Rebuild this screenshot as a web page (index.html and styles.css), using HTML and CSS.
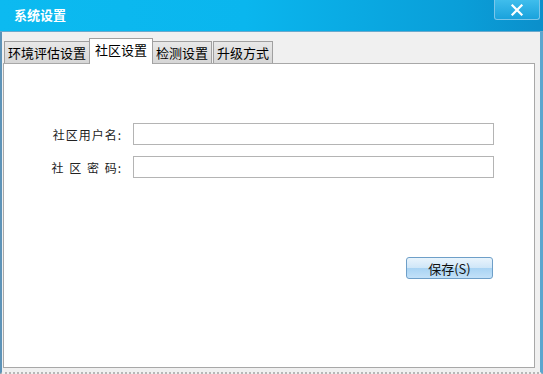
FILE: index.html
```html
<!DOCTYPE html>
<html lang="zh">
<head>
    <meta charset="UTF-8">
    <title>系统设置</title>
    <link rel="stylesheet" href="styles.css">
</head>
<body>
    <div class="window">
        <div class="titlebar">
            <span class="title">系统设置</span>
            <button class="close-btn">
                <svg width="14" height="12" viewBox="0 0 14 12">
                    <path d="M2.5 1.5 L11.5 10.5 M11.5 1.5 L2.5 10.5" stroke="#fff" stroke-width="2.2" stroke-linecap="square"/>
                </svg>
            </button>
        </div>
        <div class="content">
            <div class="tabs">
                <div class="tab">环境评估设置</div>
                <div class="tab active">社区设置</div>
                <div class="tab">检测设置</div>
                <div class="tab">升级方式</div>
            </div>
            <div class="panel">
                <div class="form-row">
                    <label>社区用户名:</label>
                    <input type="text">
                </div>
                <div class="form-row">
                    <label class="spaced">社 区 密 码:</label>
                    <input type="password">
                </div>
                <div class="actions">
                    <button class="save-btn">保存(S)</button>
                </div>
            </div>
        </div>
    </div>
</body>
</html>
```

FILE: styles.css
```css
body {
    margin: 0;
    padding: 0;
    font-family: "Noto Sans CJK SC", "DejaVu Sans", sans-serif;
    font-size: 12px;
    color: #000;
    background: #fff;
}

.window {
    width: 543px;
    height: 374px;
    display: flex;
    flex-direction: column;
    background: #f0f0f0;
}

.titlebar {
    height: 32px;
    display: flex;
    justify-content: space-between;
    align-items: flex-start;
    background: linear-gradient(90deg, #0cbaf0 0%, #0ab6ee 45%, #0a9ed8 85%, #0b8fcb 100%);
    border-bottom: 1px solid #6aa9cc;
    box-sizing: border-box;
}

.title {
    color: #fff;
    font-weight: bold;
    font-size: 13px;
    padding: 5px 0 0 14px;
}

.close-btn {
    width: 46px;
    height: 20px;
    margin-right: 3px;
    padding: 0;
    border: 1px solid #7cc6ea;
    border-top: none;
    border-radius: 0 0 3px 3px;
    background: linear-gradient(#3fbdec, #1aa2dc);
    display: flex;
    align-items: center;
    justify-content: center;
}

.content {
    flex: 1;
    display: flex;
    flex-direction: column;
    padding: 5px 5px 4px 1px;
    border-left: 2px solid #5d93b8;
    border-right: 3px solid #5ca6cf;
    border-bottom: 2px dotted #b7b7b7;
    box-sizing: border-box;
}

.tabs {
    display: flex;
    align-items: flex-end;
    padding-left: 1px;
    height: 26px;
    position: relative;
    z-index: 1;
}

.tab {
    height: 21px;
    line-height: 21px;
    padding: 0 3px;
    font-size: 13px;
    background: linear-gradient(#e8e8e8, #d6d6d6);
    border: 1px solid #a0a0a0;
    border-bottom: none;
    margin-right: 1px;
}

.tab.active {
    height: 25px;
    line-height: 22px;
    background: #fff;
    margin: 0 0 -1px -2px;
    padding: 0 5px;
}

.tab.active + .tab {
    margin-left: -1px;
}

.panel {
    flex: 1;
    background: #fff;
    border: 1px solid #a8a8a8;
    padding-top: 59px;
    display: flex;
    flex-direction: column;
}

.form-row {
    display: flex;
    align-items: center;
    margin-bottom: 11px;
}

.form-row label {
    width: 118px;
    text-align: right;
    padding-right: 11px;
    color: #222;
    letter-spacing: 1px;
}

.form-row label.spaced {
    word-spacing: 1px;
}

.form-row input {
    width: 361px;
    height: 22px;
    box-sizing: border-box;
    border: 1px solid #b4b4b4;
    margin: 0;
}

.actions {
    display: flex;
    justify-content: flex-end;
    padding: 68px 41px 0 0;
}

.save-btn {
    width: 87px;
    height: 22px;
    font-family: inherit;
    font-size: 13px;
    color: #111;
    border: 1px solid #6e9fc8;
    border-radius: 3px;
    background: linear-gradient(#e9f4fc 0%, #cfe6f8 50%, #a9d3f3 51%, #c2e1f8 100%);
    padding: 0;
}
```
